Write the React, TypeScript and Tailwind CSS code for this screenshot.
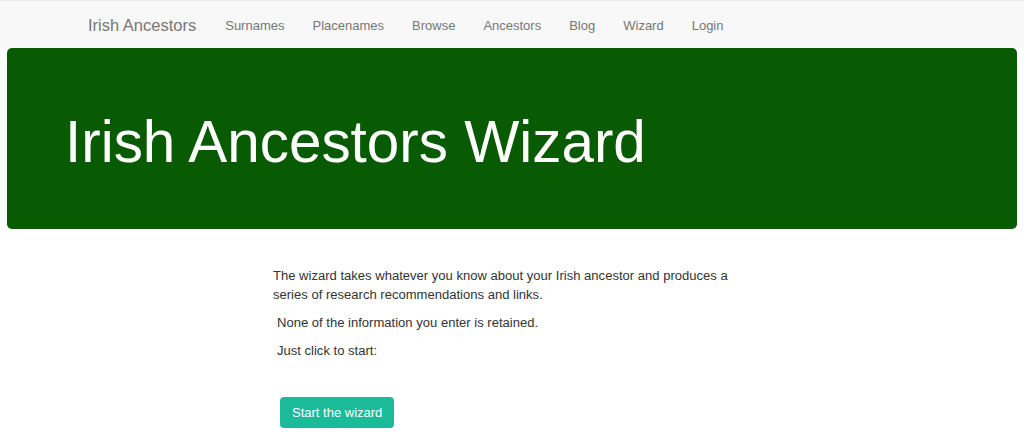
import React from "react";

export default function App() {
  const links = ["Surnames", "Placenames", "Browse", "Ancestors", "Blog", "Wizard", "Login"];
  return (
    <div
      className="w-[1024px] h-[448px] bg-white overflow-hidden text-[#333]"
      style={{ fontFamily: '"Liberation Sans", Arial, sans-serif' }}
    >
      <nav className="h-[48px] bg-[#f8f8f8] border-t border-[#ececec] flex items-center pl-[88px] pt-[2px]">
        <span className="text-[16.5px] text-[#777] pr-[15px]">Irish Ancestors</span>
        <ul className="flex items-center">
          {links.map((l) => (
            <li key={l} className="px-[14px] text-[13px] text-[#777]">
              {l}
            </li>
          ))}
        </ul>
      </nav>
      <div className="mx-[7px] bg-[#085b02] rounded-[5px] h-[181px] pl-[58px] pt-[62px]">
        <h1 className="text-[58.4px] leading-[64px] text-white">Irish Ancestors Wizard</h1>
      </div>
      <div className="pl-[273px] pt-[37px] text-[13.05px] leading-[19px] w-[760px]">
        <p className="mb-[9px]">
          The wizard takes whatever you know about your Irish ancestor and produces a series of research
          recommendations and links.
        </p>
        <p className="mb-[9px] pl-[4px]">None of the information you enter is retained.</p>
        <p className="pl-[4px]">Just click to start:</p>
        <div className="pl-[7px] pt-[37px]">
          <button className="h-[31px] px-[12px] rounded-[4px] bg-[#1bba99] text-white text-[13px]">
            Start the wizard
          </button>
        </div>
      </div>
    </div>
  );
}
